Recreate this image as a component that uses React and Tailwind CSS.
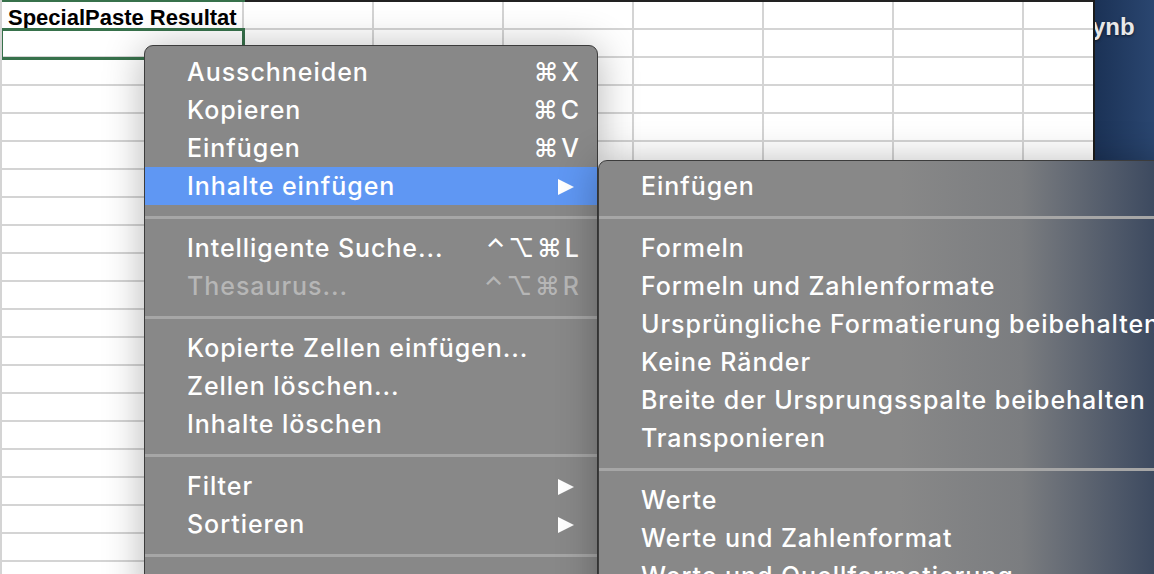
import React from "react";

const COLS = [242, 130, 130, 130, 130, 130, 130, 130];
const ROWS = 21;

const mainMenu = [
  { label: "Ausschneiden", key: "⌘X" },
  { label: "Kopieren", key: "⌘C" },
  { label: "Einfügen", key: "⌘V" },
  { label: "Inhalte einfügen", arrow: true, active: true },
  { sep: true },
  { label: "Intelligente Suche...", key: "⌃⌥⌘L" },
  { label: "Thesaurus...", key: "⌃⌥⌘R", disabled: true },
  { sep: true },
  { label: "Kopierte Zellen einfügen..." },
  { label: "Zellen löschen..." },
  { label: "Inhalte löschen" },
  { sep: true },
  { label: "Filter", arrow: true },
  { label: "Sortieren", arrow: true },
  { sep: true },
];

const subMenu = [
  { label: "Einfügen" },
  { sep: true },
  { label: "Formeln" },
  { label: "Formeln und Zahlenformate" },
  { label: "Ursprüngliche Formatierung beibehalten" },
  { label: "Keine Ränder" },
  { label: "Breite der Ursprungsspalte beibehalten" },
  { label: "Transponieren" },
  { sep: true },
  { label: "Werte" },
  { label: "Werte und Zahlenformat" },
  { label: "Werte und Quellformatierung" },
];

function Arrow() {
  return (
    <svg width="18" height="18" viewBox="0 0 18 18" className="mr-[4px]">
      <path d="M1 1 L17 9 L1 17 Z" fill="#ffffff" />
    </svg>
  );
}

function MenuItem({ item }) {
  if (item.sep) {
    return (
      <div className="h-[24px] flex items-center">
        <div className="h-[3px] w-full bg-[#a6a6a6]" />
      </div>
    );
  }
  return (
    <div
      className={`h-[38px] flex items-center justify-between pl-[42px] pr-[18px] pt-[2px] whitespace-nowrap
        ${item.active ? "bg-[#5f97f3]" : ""}
        ${item.disabled ? "text-[#b6b6b6]" : "text-white"}`}
    >
      <span>{item.label}</span>
      {item.key && <span className="tracking-[3px] mr-[-3px]">{item.key}</span>}
      {item.arrow && <Arrow />}
    </div>
  );
}

export default function App() {
  return (
    <div
      className="relative w-[1154px] h-[574px] overflow-hidden flex bg-white"
      style={{ fontFamily: "Inter, 'DejaVu Sans', sans-serif" }}
    >
      {/* Spreadsheet */}
      <div className="w-[1095px] shrink-0 border-r-2 border-[#1b1b1b] border-l-2 border-l-[#d4d4d4] overflow-hidden">
        <div className="flex h-[2px]">
          <div className="w-[243px] bg-[#37714b]" />
          <div className="flex-1 bg-[#222222]" />
        </div>
        {Array.from({ length: ROWS }).map((_, r) => (
          <div key={r} className="flex h-[28px]">
            {COLS.map((w, c) => (
              <div
                key={c}
                style={{ width: w }}
                className="relative shrink-0 h-full border-r-2 border-b-2 border-[#d4d4d4]"
              >
                {r === 0 && c === 0 && (
                  <span
                    className="absolute left-[6px] top-[-1px] text-[22px] font-bold text-black whitespace-nowrap"
                    style={{ fontFamily: "'Liberation Sans', Arial, sans-serif" }}
                  >
                    SpecialPaste Resultat
                  </span>
                )}
                {r === 1 && c === 0 && (
                  <div className="absolute left-[-2px] top-[-2px] w-[245px] h-[32px] border-[3px] border-[#37714b]" />
                )}
              </div>
            ))}
          </div>
        ))}
      </div>

      {/* Desktop */}
      <div className="flex-1 bg-[linear-gradient(to_right,#1b3256,#2a4670)] overflow-hidden">
        <div
          className="ml-[-3px] mt-[9px] text-[24px] font-bold text-[#e8e8e8] [text-shadow:0_1px_3px_rgba(0,0,0,0.6)]"
          style={{ fontFamily: "'Liberation Sans', Arial, sans-serif" }}
        >
          ynb
        </div>
      </div>

      {/* Context menu */}
      <div className="absolute left-[144px] top-[45px] w-[454px] h-[560px] bg-[#888888] border border-[#3c3c3c] rounded-t-[9px] pt-[7px] text-[25px] font-medium tracking-[0.95px] shadow-[0_4px_40px_rgba(0,0,0,0.3)]">
        {mainMenu.map((item, i) => (
          <MenuItem key={i} item={item} />
        ))}
      </div>

      {/* Submenu */}
      <div className="absolute left-[598px] top-[160px] w-[580px] h-[460px] border border-[#3c3c3c] rounded-tl-[9px] pt-[6px] text-[25px] font-medium tracking-[0.95px] bg-[linear-gradient(to_right,#888888_52%,#7b7d80_73%,#3d4a60_96%)] shadow-[0_4px_40px_rgba(0,0,0,0.3)]">
        {subMenu.map((item, i) => (
          <MenuItem key={i} item={item} />
        ))}
      </div>
    </div>
  );
}
